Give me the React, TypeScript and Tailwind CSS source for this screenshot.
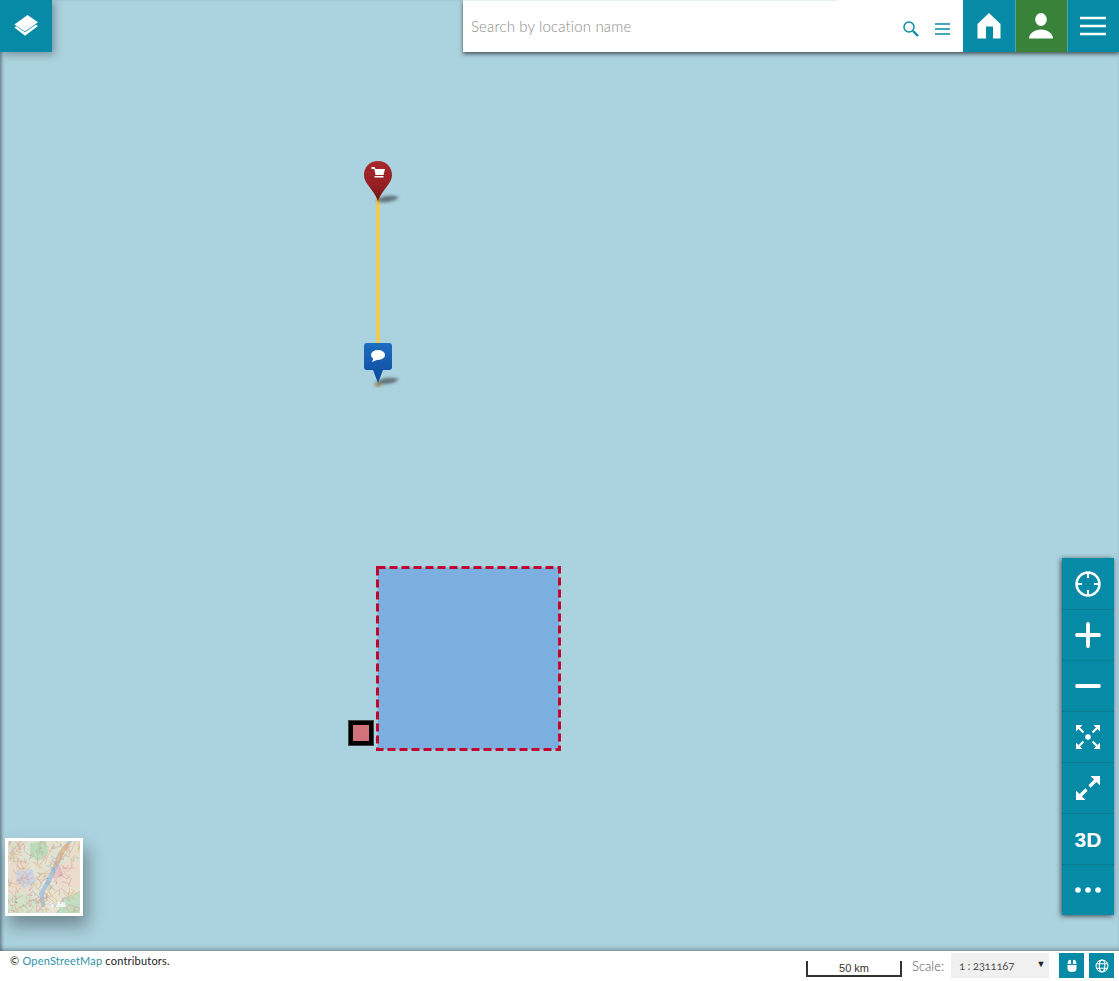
import type { ReactNode } from "react";

const font = { fontFamily: "Lato, 'Open Sans', sans-serif" };

function ToolButton({ children, first }: { children: ReactNode; first?: boolean }) {
  return (
    <button
      type="button"
      className={`flex h-[51px] w-full items-center justify-center text-white ${first ? "" : "border-t border-[#0b7a93]"}`}
    >
      {children}
    </button>
  );
}

// small seeded generator so the thumbnail's street noise stays the same on every load
function makeStreets(count: number, seed: number, reach: number) {
  let s = seed;
  const next = () => {
    s = (s * 16807) % 2147483647;
    return s / 2147483647;
  };
  let d = "";
  for (let i = 0; i < count; i++) {
    const x = next() * 72;
    const y = next() * 72;
    d += `M${x.toFixed(1)} ${y.toFixed(1)}l${((next() - 0.5) * reach).toFixed(1)} ${((next() - 0.5) * reach).toFixed(1)}l${((next() - 0.5) * reach).toFixed(1)} ${((next() - 0.5) * reach).toFixed(1)}`;
  }
  return d;
}

const pinkStreets = makeStreets(70, 4211, 16);
const orangeStreets = makeStreets(28, 917, 20);
const greyStreets = makeStreets(90, 1733, 9);

function MapThumbnail() {
  return (
    <svg viewBox="0 0 72 72" className="h-[72px] w-[72px]">
      <defs>
        <filter id="thumb-soft">
          <feGaussianBlur stdDeviation="0.35" />
        </filter>
      </defs>
      <g filter="url(#thumb-soft)">
        <rect width="72" height="72" fill="#e2e2d2" />
        <path d="M22 2l16-2 2 12-10 8-8-6z" fill="#bcdcb8" />
        <path d="M0 0h20L14 12 0 14z" fill="#dcdccb" />
        <path d="M0 20l18 0 8 16-6 14-20 2z" fill="#e9dccd" />
        <path d="M46 28l18-10 8 6v22l-20 4-8-10z" fill="#ecdccf" />
        <path d="M40 52l20-8 12 6v22H36z" fill="#e8e2d0" />
        <path d="M54 58l18-8v22H50z" fill="#bfdfc4" />
        <path d="M0 54l18-2 12 8-2 12H0z" fill="#d4e3cb" />
        <path d="M60 0h12v14l-8 2z" fill="#e8dfcb" />
        <path d="M10 30l14-2 4 12-12 8-8-8z" fill="#cfd4e4" />
        <path d="M44 26l8-2 2 10-8 4-4-6z" fill="#eac3c8" />
        <path d="M40 62l16-2 2 6H42z" fill="#f1f4ef" />
        <path d="M60 0 50 12 44 28 36 44 31 52 33 66 37 66 36 52 42 42 50 26 56 12 64 0z" fill="#a9c7de" />
        <path d="M58 2 51 12 47 24 50 24 55 13 62 3z" fill="#e8b98a" />
        <path d={greyStreets} stroke="#8e8e88" strokeWidth=".35" fill="none" />
        <path d={pinkStreets} stroke="#d99f97" strokeWidth=".55" fill="none" />
        <path d={orangeStreets} stroke="#e5bd8c" strokeWidth=".7" fill="none" />
      </g>
    </svg>
  );
}

export default function App() {
  return (
    <div className="flex h-[981px] w-[1119px] flex-col overflow-hidden bg-white" style={font}>
      {/* map canvas */}
      <main className="relative h-[951px] bg-[#abd2df] shadow-[inset_3px_0_3px_-1px_rgba(0,0,0,0.32),inset_0_-4px_4px_-2px_rgba(0,0,0,0.28)]">
        <button
          type="button"
          className="absolute left-0 top-0 flex h-[52px] w-[52px] items-center justify-center bg-[#078aa6] shadow-[2px_2px_8px_rgba(0,0,0,0.35)]"
        >
          <svg viewBox="0 0 26 26" className="h-[26px] w-[26px]" fill="#fff">
            <path d="M14.6 2 25 9.2 12 18.4 1.4 11.4z" />
            <path d="M1.4 14.4 3.2 13.2 12 19.2 23 11.6 25 13 12 22.8z" />
          </svg>
        </button>

        <div className="absolute right-0 top-0 flex h-[52px] w-[656px] shadow-[0_2px_4px_rgba(0,0,0,0.6)]">
          <div className="relative flex w-[500px] items-center bg-white pl-2">
            <div className="absolute left-0 top-0 h-px w-[374px] bg-[#e6eef1]" />
            <span className="flex-1 text-[15px] font-light tracking-[0.14px] text-[#8d8d8d]">Search by location name</span>
            <svg viewBox="0 0 16 16" className="mr-4 mt-[5px] h-4 w-4" fill="none" stroke="#0a8ba6" strokeWidth="1.500">
              <circle cx="6" cy="6" r="5" />
              <path d="M10 10l5 5" strokeWidth="2.400" />
            </svg>
            <svg viewBox="0 0 15 12" className="mr-[13px] mt-[5px] h-3 w-[15px]" stroke="#0a8ba6" strokeWidth="1.300">
              <path d="M0 1h15M0 6h15M0 11h15" />
            </svg>
          </div>
          <button type="button" className="flex w-[52px] items-center justify-center bg-[#078aa6]">
            <svg viewBox="0 0 26 28" className="h-7 w-[26px]" fill="#fff">
              <path d="M13 1 24.500 12V26.500H17V14.500H10V26.500H1.500V12z" />
            </svg>
          </button>
          <button type="button" className="flex w-[52px] items-center justify-center border-l border-[#4fa0b3] bg-[#388339] pr-px">
            <svg viewBox="0 0 26 28" className="h-7 w-[26px]" fill="#fff">
              <ellipse cx="13" cy="7.500" rx="5.800" ry="6.500" />
              <path d="M1 26.500c0-5 5.500-9 12-9s12 4 12 9z" />
            </svg>
          </button>
          <button type="button" className="flex w-[52px] items-center justify-center border-l border-[#4fa0b3] bg-[#078aa6] pr-px">
            <svg viewBox="0 0 26 20" className="h-5 w-[26px]" stroke="#fff" strokeWidth="2.400">
              <path d="M0 2h26M0 10h26M0 18h26" />
            </svg>
          </button>
        </div>

        {/* line between the two pins */}
        <div className="absolute left-[376px] top-[196px] h-[150px] w-[4px] bg-[#eccb5b]" />

        {/* red pin */}
        <svg viewBox="0 0 40 46" className="absolute left-[362px] top-[160px] h-[46px] w-[40px]">
          <defs>
            <linearGradient id="pin-red" x1="0" y1="0" x2="0" y2="1">
              <stop offset="0" stopColor="#a5282c" />
              <stop offset=".6" stopColor="#962024" />
              <stop offset="1" stopColor="#6b1216" />
            </linearGradient>
            <filter id="pin-shadow" x="-40%" y="-100%" width="180%" height="300%">
              <feGaussianBlur stdDeviation="1.600" />
            </filter>
          </defs>
          <path d="M14 41C20 35 28 35 37 37 33 41 24 44 14 41z" fill="#222" opacity=".55" filter="url(#pin-shadow)" />
          <path d="M16 1C8 1 2 7 2 15c0 9 9 13 14 26 5-13 14-17 14-26C30 7 24 1 16 1z" fill="url(#pin-red)" />
          <path d="M9.500 7h3l1 2h9.500l-1.500 6h-8l-1.200-6H9.500z" fill="#fff" />
          <rect x="12.500" y="16" width="9" height="1.500" fill="#fff" />
        </svg>

        {/* blue pin */}
        <svg viewBox="0 0 40 46" className="absolute left-[362px] top-[342px] h-[46px] w-[40px]">
          <defs>
            <linearGradient id="pin-blue" x1="0" y1="0" x2="0" y2="1">
              <stop offset="0" stopColor="#1c6dc0" />
              <stop offset="1" stopColor="#0d479c" />
            </linearGradient>
          </defs>
          <path d="M14 41C20 35 28 35 37 37 33 41 24 44 14 41z" fill="#222" opacity=".55" filter="url(#pin-shadow)" />
          <ellipse cx="16" cy="42.500" rx="3.500" ry="2" fill="#a0742f" opacity=".8" filter="url(#pin-shadow)" />
          <path d="M5 1h22a3 3 0 0 1 3 3v21a3 3 0 0 1-3 3h-6l-5 13-5-13H5a3 3 0 0 1-3-3V4a3 3 0 0 1 3-3z" fill="url(#pin-blue)" />
          <ellipse cx="16" cy="13" rx="7" ry="5" fill="#fff" />
          <path d="M11.500 16l-1.500 4 6-2.500z" fill="#fff" />
        </svg>

        {/* drawn square */}
        <svg viewBox="0 0 185 185" className="absolute left-[376px] top-[566px] h-[185px] w-[185px]">
          <rect x="1.500" y="1.500" width="182" height="182" fill="#7bafe0" stroke="#c0042e" strokeWidth="3" strokeDasharray="8 4" />
        </svg>
        <div className="absolute left-[348px] top-[720px] flex h-[26px] w-[26px] items-center justify-center border border-[#444] bg-black">
          <div className="h-4 w-4 bg-[#d2737c]" />
        </div>

        {/* map tools */}
        <div className="absolute left-[1062px] top-[558px] w-[52px] bg-[#078aa6] shadow-[-1px_1px_5px_rgba(0,0,0,0.65)]">
          <ToolButton first>
            <svg viewBox="0 0 28 28" className="h-7 w-7" fill="none" stroke="#fff" strokeWidth="2.400">
              <circle cx="14" cy="14" r="11.500" />
              <path d="M14 2v6M14 20v6M2 14h6M20 14h6" strokeWidth="2" />
            </svg>
          </ToolButton>
          <ToolButton>
            <svg viewBox="0 0 26 26" className="h-[26px] w-[26px]" stroke="#fff" strokeWidth="3.800" strokeLinecap="round">
              <path d="M13 2v22M2 13h22" />
            </svg>
          </ToolButton>
          <ToolButton>
            <svg viewBox="0 0 26 6" className="h-[6px] w-[26px]" stroke="#fff" strokeWidth="3.800" strokeLinecap="round">
              <path d="M2 3h22" />
            </svg>
          </ToolButton>
          <ToolButton>
            <svg viewBox="0 0 26 26" className="h-[26px] w-[26px]" fill="#fff" stroke="#fff">
              <circle cx="13" cy="13" r="2.800" stroke="none" />
              <path d="M1 1h6.500L1 7.500zM25 1v6.500L18.500 1zM1 25v-6.500L7.500 25zM25 25h-6.500L25 18.500z" stroke="none" />
              <path d="M3 3l5.500 5.500M23 3l-5.500 5.500M3 23l5.500-5.500M23 23l-5.500-5.500" strokeWidth="2.200" fill="none" />
            </svg>
          </ToolButton>
          <ToolButton>
            <svg viewBox="0 0 26 26" className="h-[26px] w-[26px]" fill="#fff" stroke="#fff">
              <path d="M15.500 1H25v9.500zM1 25v-9.500L10.500 25z" stroke="none" />
              <path d="M21 5l-6.500 6.500M5 21l6.500-6.500" strokeWidth="3.200" fill="none" />
            </svg>
          </ToolButton>
          <ToolButton>
            <span className="text-[21px] font-bold leading-none" style={{ fontFamily: "'Liberation Sans', sans-serif" }}>3D</span>
          </ToolButton>
          <ToolButton>
            <svg viewBox="0 0 26 6" className="h-[6px] w-[26px]" fill="#fff">
              <circle cx="3" cy="3" r="2.800" />
              <circle cx="13" cy="3" r="2.800" />
              <circle cx="23" cy="3" r="2.800" />
            </svg>
          </ToolButton>
        </div>

        {/* basemap switcher */}
        <div className="absolute left-[5px] top-[838px] border-[3px] border-white shadow-[4px_10px_16px_rgba(0,0,0,0.35)]">
          <MapThumbnail />
        </div>
      </main>

      {/* status bar */}
      <footer className="relative flex flex-1 items-start justify-between pl-[10px] pr-[5px] text-[11px]">
        <p className="pt-[2px] tracking-[0.2px] text-[#222]">
          © <span className="text-[#2f93a8]">OpenStreetMap</span> contributors.
        </p>
        <div className="flex items-start">
          <div className="mr-[10px] mt-[10px] flex h-[16px] w-[96px] items-end justify-center border-x-2 border-b-2 border-[#333] text-[11px] leading-[13px] text-[#333]" style={{ fontFamily: "'Liberation Sans', sans-serif" }}>
            50 km
          </div>
          <span className="mr-[5px] mt-[6px] w-[34px] text-[13px] font-light text-[#555]">Scale:</span>
          <div className="relative mr-[10px] mt-[2px] flex h-[25px] w-[98px] items-center bg-[#f0f0f0] pl-2 text-[11.5px] tracking-[-0.3px] text-[#555] oldstyle-nums">
            1 : 2311167
            <span className="absolute right-[4px] top-[4px] text-[9px] text-[#222]">▼</span>
          </div>
          <button type="button" className="mr-[5px] mt-[2px] flex h-[25px] w-[25px] items-center justify-center bg-[#078aa6]">
            <svg viewBox="0 0 10 13" className="h-[13px] w-[10px]" fill="#fff">
              <path d="M1 2.500a2 2 0 0 1 3-1.500v4H0.500zM9 2.500a2 2 0 0 0-3-1.500v4h3.500zM0.500 6h9v3.500a4.500 3.500 0 0 1-9 0z" />
            </svg>
          </button>
          <button type="button" className="mt-[2px] flex h-[25px] w-[25px] items-center justify-center bg-[#078aa6]">
            <svg viewBox="0 0 16 16" className="h-[14px] w-[14px]" fill="none" stroke="#fff" strokeWidth="1.200">
              <circle cx="8" cy="8" r="6.800" />
              <ellipse cx="8" cy="8" rx="3.200" ry="6.800" />
              <path d="M1.500 5.500h13M1.500 10.500h13" />
            </svg>
          </button>
        </div>
      </footer>
    </div>
  );
}
